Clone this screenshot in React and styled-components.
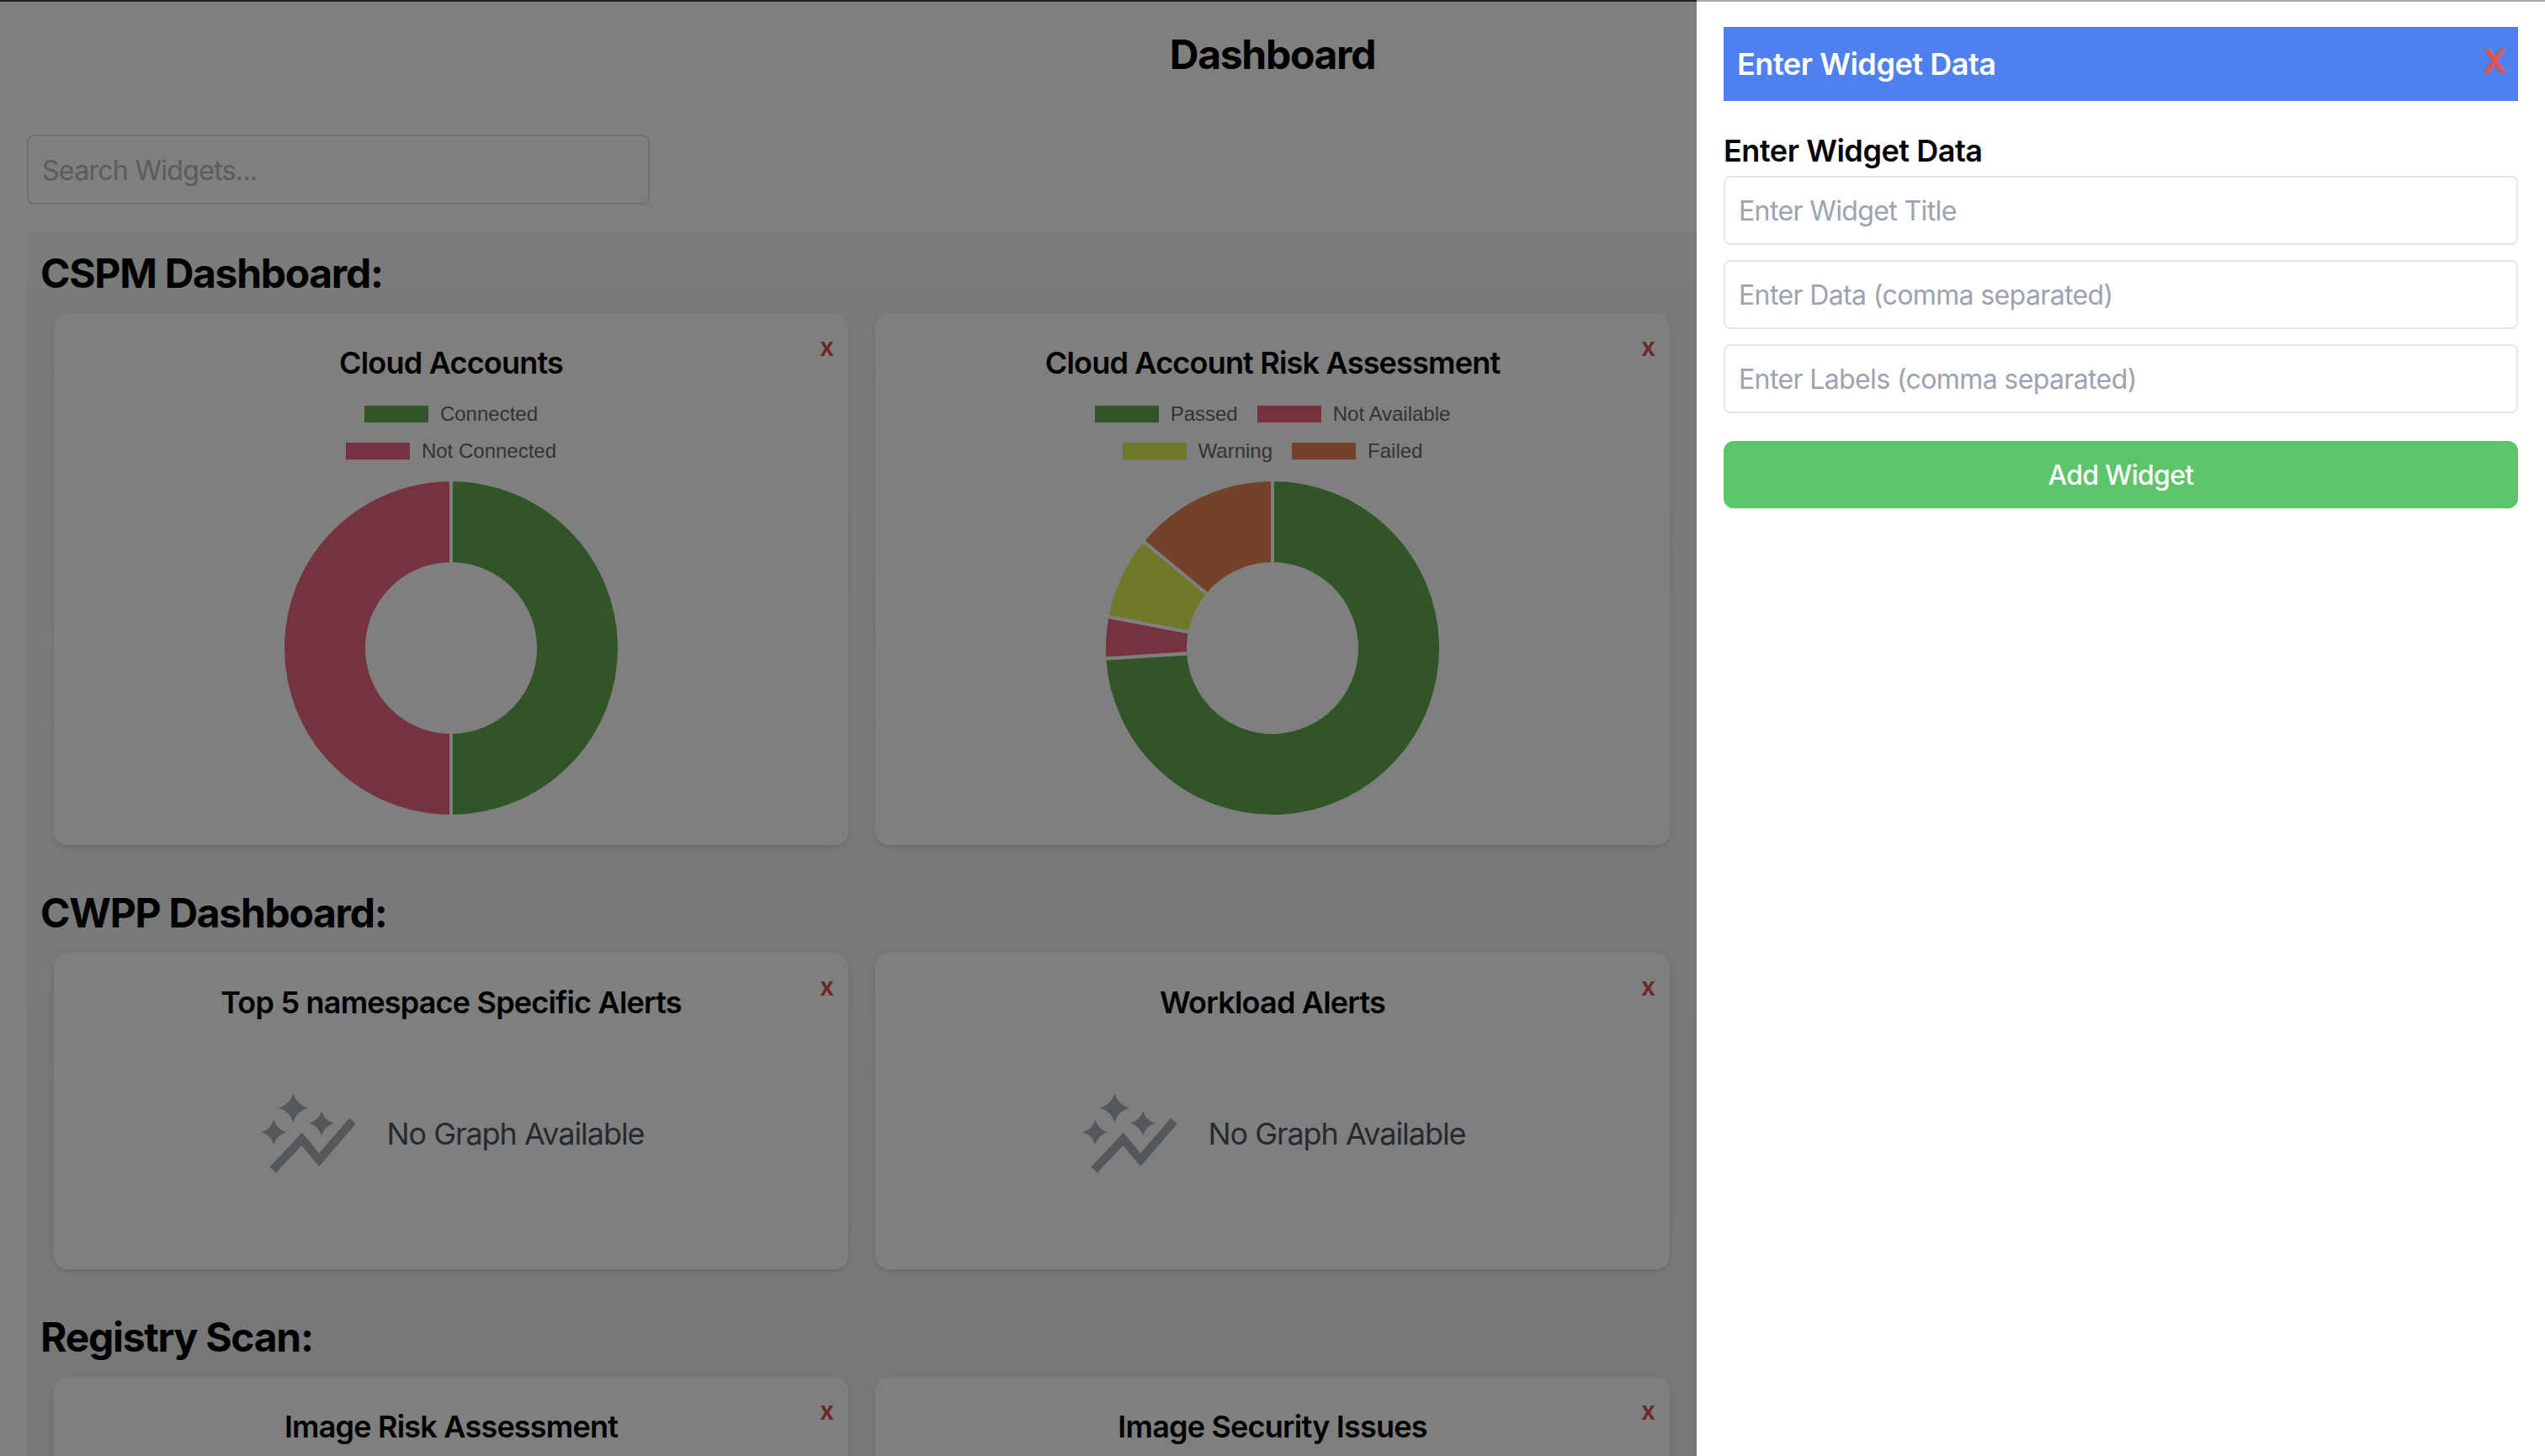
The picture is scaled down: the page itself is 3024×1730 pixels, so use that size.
import { useState } from "react";
import styled, { createGlobalStyle } from "styled-components";

const GlobalStyle = createGlobalStyle`
  html, body {
    margin: 0;
    padding: 0;
    background: #fff;
    font-family: Inter, "Noto Sans", sans-serif;
  }
  * { box-sizing: border-box; }
`;

const GREEN = "#63a953";
const RED = "#ea6680";
const OLIVE = "#dcf050";
const ORANGE = "#e88256";

const sections = [
  {
    title: "CSPM Dashboard:",
    widgets: [
      {
        title: "Cloud Accounts",
        legend: [
          [{ label: "Connected", color: GREEN }],
          [{ label: "Not Connected", color: RED }],
        ],
        data: [
          { value: 50, color: GREEN },
          { value: 50, color: RED },
        ],
      },
      {
        title: "Cloud Account Risk Assessment",
        legend: [
          [
            { label: "Passed", color: GREEN },
            { label: "Not Available", color: RED },
          ],
          [
            { label: "Warning", color: OLIVE },
            { label: "Failed", color: ORANGE },
          ],
        ],
        data: [
          { value: 74, color: GREEN },
          { value: 4, color: RED },
          { value: 8, color: OLIVE },
          { value: 14, color: ORANGE },
        ],
      },
    ],
  },
  {
    title: "CWPP Dashboard:",
    widgets: [{ title: "Top 5 namespace Specific Alerts" }, { title: "Workload Alerts" }],
  },
  {
    title: "Registry Scan:",
    // the bottom of these two cards is below the fold
    widgets: [
      { title: "Image Risk Assessment", folded: true },
      { title: "Image Security Issues", folded: true },
    ],
  },
];

const polar = (r, turn) => {
  const a = turn * 2 * Math.PI;
  return `${(r * Math.sin(a)).toFixed(2)} ${(-r * Math.cos(a)).toFixed(2)}`;
};

const Donut = ({ data }) => {
  const total = data.reduce((sum, d) => sum + d.value, 0);
  const R = 200;
  const r = 100;
  let start = 0;
  return (
    <DonutSvg viewBox="-202 -202 404 404">
      {data.map((d) => {
        const end = start + d.value / total;
        const large = end - start > 0.5 ? 1 : 0;
        const path = `M${polar(R, start)}A${R} ${R} 0 ${large} 1 ${polar(R, end)}L${polar(r, end)}A${r} ${r} 0 ${large} 0 ${polar(r, start)}Z`;
        start = end;
        return <path key={d.color} d={path} fill={d.color} stroke="#fff" strokeWidth="4" />;
      })}
    </DonutSvg>
  );
};

const star = (cx, cy, s) => {
  const k = s * 0.22;
  return `M${cx} ${cy - s}Q${cx + k} ${cy - k} ${cx + s} ${cy}Q${cx + k} ${cy + k} ${cx} ${cy + s}Q${cx - k} ${cy + k} ${cx - s} ${cy}Q${cx - k} ${cy - k} ${cx} ${cy - s}Z`;
};

const SparkleChart = () => (
  <svg width="113" height="96" viewBox="0 0 110 93.5">
    <path d={star(36.4, 17, 17)} fill="#a9afb9" />
    <path d={star(13.9, 45, 14.5)} fill="#a9afb9" />
    <path d={star(69.2, 34.7, 14.5)} fill="#a9afb9" />
    <path d="M12.8 88.7L46.4 53L66.4 77L105 32" fill="none" stroke="#a9afb9" strokeWidth="10" />
  </svg>
);

const Widget = ({ title, legend, data, folded }) => (
  <Card>
    <RemoveButton>x</RemoveButton>
    <CardTitle>{title}</CardTitle>
    {data && (
      <>
        <Legend>
          {legend.map((row, i) => (
            <LegendRow key={i}>
              {row.map((item) => (
                <LegendItem key={item.label}>
                  <Swatch color={item.color} />
                  {item.label}
                </LegendItem>
              ))}
            </LegendRow>
          ))}
        </Legend>
        <Donut data={data} />
      </>
    )}
    {!data && !folded && (
      <NoGraph>
        <SparkleChart />
        <span>No Graph Available</span>
      </NoGraph>
    )}
  </Card>
);

const App = () => {
  const [query, setQuery] = useState("");
  return (
    <Page>
      <GlobalStyle />
      <PageTitle>Dashboard</PageTitle>
      <Search placeholder="Search Widgets..." value={query} onChange={(e) => setQuery(e.target.value)} />
      <Board>
        {sections.map((section) => (
          <div key={section.title}>
            <SectionTitle>{section.title}</SectionTitle>
            <CardGrid>
              {section.widgets.map((w) => (
                <Widget key={w.title} {...w} />
              ))}
            </CardGrid>
          </div>
        ))}
      </Board>
      <Overlay />
      <Drawer>
        <DrawerHeader>
          <span>Enter Widget Data</span>
          <DrawerClose>X</DrawerClose>
        </DrawerHeader>
        <FormTitle>Enter Widget Data</FormTitle>
        <Form>
          <FormInput placeholder="Enter Widget Title" />
          <FormInput placeholder="Enter Data (comma separated)" />
          <FormInput placeholder="Enter Labels (comma separated)" />
          <AddButton type="button">Add Widget</AddButton>
        </Form>
      </Drawer>
      <TopEdge />
    </Page>
  );
};

const Page = styled.div`
  position: relative;
  height: 1730px;
  overflow: hidden;
  background: #fff;
`;

const TopEdge = styled.div`
  position: absolute;
  top: 0;
  left: 0;
  right: 0;
  height: 2px;
  background: linear-gradient(to right, #222 2016px, #aaa 2016px);
`;

const PageTitle = styled.h1`
  margin: 0;
  padding-top: 33px;
  text-align: center;
  font-size: 48px;
  line-height: 64px;
  font-weight: 700;
  letter-spacing: -1.3px;
  color: #000;
`;

const Search = styled.input`
  display: block;
  width: 740px;
  height: 83px;
  margin: 63px 0 33px 32px;
  padding: 2px 16px 0;
  border: 2px solid #dcdfe3;
  border-radius: 8px;
  background: #fff;
  font: 400 32px Inter, sans-serif;
  letter-spacing: -0.68px;
  outline: none;
  &::placeholder { color: #b4b8bf; }
`;

const Board = styled.main`
  margin: 0 32px;
  height: 1454px;
  padding: 16px 16px 0;
  display: flex;
  flex-direction: column;
  gap: 48px;
  background: linear-gradient(#f5f6f7, #eeeff1);
`;

const SectionTitle = styled.h2`
  margin: 0 0 14px;
  font-size: 48px;
  line-height: 66px;
  font-weight: 700;
  letter-spacing: -1.3px;
  color: #000;
`;

const CardGrid = styled.div`
  display: grid;
  grid-template-columns: repeat(3, 944px);
  gap: 32px;
  padding-left: 16px;
`;

const Card = styled.article`
  position: relative;
  display: flex;
  flex-direction: column;
  align-items: center;
  padding: 32px 32px 36px;
  min-height: 376px;
  background: #fff;
  border-radius: 16px;
  box-shadow: 0 2px 6px rgba(0, 0, 0, 0.12);
`;

const RemoveButton = styled.span`
  position: absolute;
  top: 23px;
  right: 17px;
  font-size: 30px;
  line-height: 34px;
  font-weight: 600;
  color: #e14b4b;
`;

const CardTitle = styled.h3`
  margin: 0 0 2px;
  font-size: 36px;
  line-height: 54px;
  font-weight: 600;
  letter-spacing: -0.8px;
  color: #000;
`;

const Legend = styled.div`
  margin: 10px 0 14px;
  font-family: "Liberation Sans", Arial, sans-serif;
  font-size: 24px;
  color: #666;
`;

const LegendRow = styled.div`
  display: flex;
  justify-content: center;
  gap: 23px;
  height: 44px;
`;

const LegendItem = styled.div`
  display: flex;
  align-items: center;
  gap: 14px;
`;

const Swatch = styled.i`
  width: 76px;
  height: 20px;
  background: ${(props) => props.color};
`;

const DonutSvg = styled.svg`
  display: block;
  width: 404px;
  height: 404px;
  margin: -4px 0;
`;

const NoGraph = styled.div`
  flex: 1;
  display: flex;
  align-items: center;
  justify-content: center;
  gap: 35px;
  padding-left: 5px;
  padding-top: 1px;
  font-size: 36px;
  letter-spacing: -1.05px;
  color: #4b5563;
`;

const Overlay = styled.div`
  position: absolute;
  inset: 0;
  background: rgba(0, 0, 0, 0.5);
`;

const Drawer = styled.aside`
  position: absolute;
  top: 0;
  right: 0;
  bottom: 0;
  width: 1008px;
  padding: 32px;
  background: #fff;
`;

const DrawerHeader = styled.header`
  display: flex;
  align-items: center;
  justify-content: space-between;
  height: 88px;
  padding: 0 16px;
  background: #4f80ef;
  font-size: 36px;
  font-weight: 600;
  letter-spacing: -0.45px;
  color: #fff;
`;

const DrawerClose = styled.span`
  font-size: 40px;
  line-height: 40px;
  margin: -6px -3px 0 0;
  font-weight: 700;
  letter-spacing: 0;
  color: #e25450;
`;

const FormTitle = styled.h4`
  margin: 31px 0 2px;
  font-size: 36px;
  line-height: 56px;
  font-weight: 600;
  letter-spacing: -0.45px;
  color: #000;
`;

const Form = styled.form`
  display: flex;
  flex-direction: column;
  gap: 18px;
`;

const FormInput = styled.input`
  height: 82px;
  padding: 1px 16px 0;
  border: 2px solid #e5e7eb;
  border-radius: 8px;
  font: 400 32px Inter, sans-serif;
  letter-spacing: -0.62px;
  outline: none;
  &::placeholder { color: #9ca3af; }
`;

const AddButton = styled.button`
  height: 80px;
  margin-top: 15px;
  border: 0;
  border-radius: 12px;
  background: #5ec46a;
  color: #fff;
  font: 500 32px Inter, sans-serif;
  letter-spacing: -0.7px;
`;

export default App;
